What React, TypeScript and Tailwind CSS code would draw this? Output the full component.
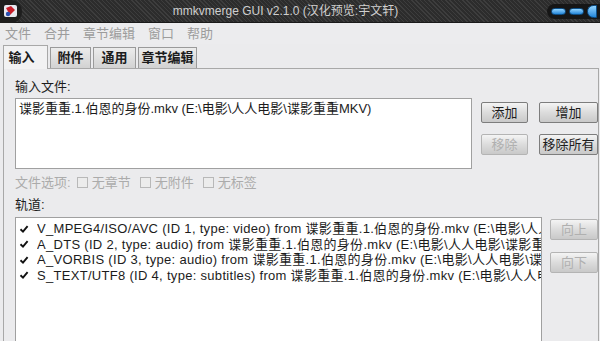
import React from 'react';

const FONT = { fontFamily: '"Liberation Sans", "Noto Sans CJK SC", sans-serif' };

const Check = () => (
  <span className="w-[10px] h-[10px] flex items-center justify-center shrink-0">
    <svg width="10" height="10" viewBox="0 0 10 10">
      <path d="M1.5 5.2 L4 7.6 L8.6 2.2" fill="none" stroke="#111" strokeWidth="1.9" />
    </svg>
  </span>
);

const Btn: React.FC<{ label: string; w: string; disabled?: boolean }> = ({ label, w, disabled }) => (
  <div
    className={`${w} h-[21px] flex items-center justify-center text-[13px] border rounded-[2px] bg-gradient-to-b from-[#f4f4f4] via-[#dcdcdc] to-[#c9c9c9] ${
      disabled ? 'border-[#b4b4b4] text-[#b0b0b0]' : 'border-[#7d7d7d] text-[#1c1c1c]'
    }`}
  >
    {label}
  </div>
);

const Box: React.FC<{ label: string }> = ({ label }) => (
  <div className="flex items-center gap-[4px]">
    <span className="w-[11px] h-[11px] border border-[#b8b8b8] bg-[#ececec]" />
    <span>{label}</span>
  </div>
);

const tracks = [
  'V_MPEG4/ISO/AVC (ID 1, type: video) from 谍影重重.1.伯恩的身份.mkv (E:\\电影\\人人电影\\谍影重重MKV)',
  'A_DTS (ID 2, type: audio) from 谍影重重.1.伯恩的身份.mkv (E:\\电影\\人人电影\\谍影重重MKV)',
  'A_VORBIS (ID 3, type: audio) from 谍影重重.1.伯恩的身份.mkv (E:\\电影\\人人电影\\谍影重重MKV)',
  'S_TEXT/UTF8 (ID 4, type: subtitles) from 谍影重重.1.伯恩的身份.mkv (E:\\电影\\人人电影\\谍影重重MKV)',
];

export default function App() {
  return (
    <div className="w-[600px] h-[341px] overflow-hidden bg-[#ebebed] flex flex-col text-[#1c1c1c]" style={FONT}>
      {/* title bar */}
      <div className="h-[23px] shrink-0 flex items-center bg-[repeating-linear-gradient(45deg,#3d3d3d_0px,#3d3d3d_1px,#2c2c2c_1px,#2c2c2c_3px)] border-b border-[#1a1a1a]">
        <div className="w-[22px] h-[23px] rounded-r-full bg-[#1e1e1e] flex items-center justify-center shrink-0">
          <svg width="16" height="16" viewBox="0 0 16 16">
            <rect x="1" y="2" width="13" height="12" rx="2" fill="#e8e8f0" />
            <path d="M3 5 L8 3 L12 7 L7 12 Z" fill="#c81e2a" />
            <circle cx="5" cy="11" r="2.2" fill="#2a4fb0" />
          </svg>
        </div>
        <div className="flex-1 text-center text-[12px] text-[#cfcfcf] pl-[2px]">mmkvmerge GUI v2.1.0 (汉化预览:宇文轩)</div>
        <div className="flex items-center gap-[3px] h-[15px] pl-[4px] pr-[3px] rounded-l-full bg-[#161616]">
          <span className="w-[15px] h-[7px] rounded-full bg-gradient-to-b from-[#8fd4ff] to-[#1f86d8] border border-[#0d4f88]" />
          <span className="w-[15px] h-[7px] rounded-full bg-gradient-to-b from-[#8fd4ff] to-[#1f86d8] border border-[#0d4f88]" />
          <span className="w-[10px] h-[13px] rounded-l-full bg-gradient-to-b from-[#8fd4ff] to-[#1f86d8] border border-[#0d4f88]" />
        </div>
      </div>

      {/* menu */}
      <div className="h-[21px] shrink-0 flex items-center text-[13px] text-[#9c9c9c] pl-[5px] gap-[13px] bg-[#ececee]">
        <span>文件</span>
        <span>合并</span>
        <span>章节编辑</span>
        <span>窗口</span>
        <span>帮助</span>
      </div>

      {/* tabs */}
      <div className="h-[24px] shrink-0 flex items-end pl-[3px] gap-[2px] text-[13px] font-bold">
        <div className="w-[45px] h-[24px] flex items-center justify-center bg-[#f2f2f3] border border-b-0 border-[#a8a8a8] -mb-px relative z-10 pr-[8px]">输入</div>
        <div className="w-[41px] h-[21px] flex items-center justify-center bg-gradient-to-b from-[#ececec] to-[#d2d2d2] border border-b-0 border-[#9a9a9a]">附件</div>
        <div className="w-[43px] h-[21px] flex items-center justify-center bg-gradient-to-b from-[#ececec] to-[#d2d2d2] border border-b-0 border-[#9a9a9a]">通用</div>
        <div className="w-[59px] h-[21px] flex items-center justify-center bg-gradient-to-b from-[#ececec] to-[#d2d2d2] border border-b-0 border-[#9a9a9a]">章节编辑</div>
      </div>

      {/* panel */}
      <div className="flex-1 ml-[3px] mr-[1px] border border-b-0 border-[#a8a8a8] bg-[#ebebed] flex flex-col pl-[11px] pt-[10px] text-[13px]">
        <div className="h-[15px] leading-[15px]">输入文件:</div>
        <div className="flex mt-[4px]">
          <div className="w-[457px] h-[71px] bg-white border border-[#a0a0a0] px-[3px] pt-[2px] leading-[16px] whitespace-nowrap overflow-hidden">
            谍影重重.1.伯恩的身份.mkv (E:\电影\人人电影\谍影重重MKV)
          </div>
          <div className="ml-[9px] mt-[4px] grid grid-cols-[47px_59px] gap-x-[11px] gap-y-[11px] content-start">
            <Btn label="添加" w="w-[47px]" />
            <Btn label="增加" w="w-[59px]" />
            <Btn label="移除" w="w-[47px]" disabled />
            <Btn label="移除所有" w="w-[59px]" />
          </div>
        </div>

        <div className="flex items-center h-[15px] mt-[6px] text-[#ababab] gap-[8px]">
          <span className="mr-[-2px]">文件选项:</span>
          <Box label="无章节" />
          <div className="ml-[1px]"><Box label="无附件" /></div>
          <div className="ml-[1px]"><Box label="无标签" /></div>
        </div>

        <div className="h-[15px] leading-[15px] mt-[7px]">轨道:</div>

        <div className="flex mt-[5px] flex-1 min-h-0">
          <div className="w-[527px] bg-white border border-b-0 border-[#a0a0a0] pt-[3px] overflow-hidden">
            {tracks.map((t) => (
              <div key={t} className="h-[15.5px] flex items-center pl-[3px] gap-[8px] whitespace-nowrap overflow-hidden">
                <Check />
                <span className="min-w-0 overflow-hidden text-clip tracking-[0.3px]">{t}</span>
              </div>
            ))}
          </div>
          <div className="ml-[8px] flex flex-col gap-[12px] pt-[2px]">
            <Btn label="向上" w="w-[48px]" disabled />
            <Btn label="向下" w="w-[48px]" disabled />
          </div>
        </div>
      </div>
    </div>
  );
}
